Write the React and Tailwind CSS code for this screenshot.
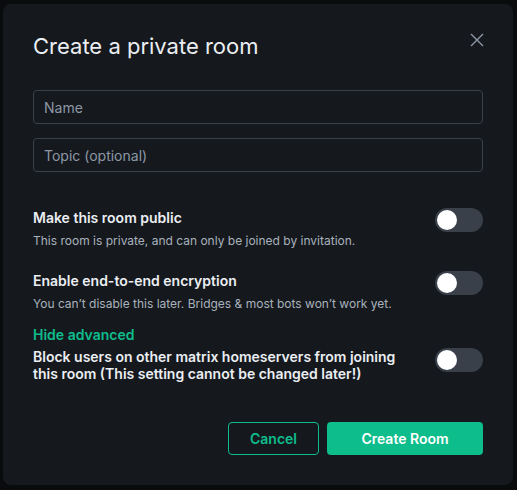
import React, { useState } from 'react';

const Toggle = ({ on, onChange }) => (
  <button
    type="button"
    onClick={() => onChange(!on)}
    className={`relative shrink-0 w-[48px] h-[24px] rounded-full transition-colors ${on ? 'bg-[#0dbd8b]' : 'bg-[#394049]'}`}
  >
    <span
      className={`absolute top-[2px] w-[20px] h-[20px] rounded-full bg-white transition-all ${on ? 'left-[26px]' : 'left-[2px]'}`}
    ></span>
  </button>
);

const ToggleRow = ({ label, description, on, onChange, className = '', labelClass = 'leading-[20px]' }) => (
  <div className={`flex items-start justify-between gap-[20px] ${className}`}>
    <div className="flex flex-col">
      <span className={`text-[14px] font-semibold text-[#ebeef2] ${labelClass}`}>{label}</span>
      {description && (
        <span className="mt-[5px] text-[12px] leading-[16px] text-[#a9b2bc]">{description}</span>
      )}
    </div>
    <Toggle on={on} onChange={onChange} />
  </div>
);

const App = () => {
  const [name, setName] = useState('');
  const [topic, setTopic] = useState('');
  const [isPublic, setIsPublic] = useState(false);
  const [encrypted, setEncrypted] = useState(false);
  const [blockFederation, setBlockFederation] = useState(false);

  return (
    <div className="min-h-screen bg-[#0a0b0d] pl-[3px] pt-[4px] font-['Inter','Noto_Sans',sans-serif]">
      <div className="w-[510px] h-[481px] rounded-[8px] bg-[#15191e] px-[30px] pt-[28px] flex flex-col">
        <div className="flex items-start justify-between">
          <h1 className="text-[22px] leading-[28px] font-normal text-[#ebeef2]">Create a private room</h1>
          <button type="button" className="mt-[1px] mr-[-1px] text-[#8d97a5]">
            <svg width="14" height="14" viewBox="0 0 14 14" fill="none" stroke="currentColor" strokeWidth="1.4">
              <path d="M1 1L13 13M13 1L1 13" />
            </svg>
          </button>
        </div>

        <input
          type="text"
          value={name}
          onChange={(e) => setName(e.target.value)}
          placeholder="Name"
          className="mt-[30px] h-[34px] w-full rounded-[4px] border border-[#394049] bg-transparent px-[10px] text-[14px] text-[#ebeef2] placeholder:text-[#8d97a5] focus:outline-none"
        />
        <input
          type="text"
          value={topic}
          onChange={(e) => setTopic(e.target.value)}
          placeholder="Topic (optional)"
          className="mt-[14px] h-[34px] w-full rounded-[4px] border border-[#394049] bg-transparent px-[10px] text-[14px] text-[#ebeef2] placeholder:text-[#8d97a5] focus:outline-none"
        />

        <ToggleRow
          className="mt-[36px]"
          label="Make this room public"
          description="This room is private, and can only be joined by invitation."
          on={isPublic}
          onChange={setIsPublic}
        />
        <ToggleRow
          className="mt-[22px]"
          label="Enable end-to-end encryption"
          description="You can’t disable this later. Bridges & most bots won’t work yet."
          on={encrypted}
          onChange={setEncrypted}
        />

        <button type="button" className="mt-[13px] self-start text-[14px] leading-[20px] font-semibold text-[#0dbd8b]">
          Hide advanced
        </button>
        <ToggleRow
          className="mt-[3px]"
          labelClass="leading-[17px]"
          label="Block users on other matrix homeservers from joining this room (This setting cannot be changed later!)"
          on={blockFederation}
          onChange={setBlockFederation}
        />

        <div className="mt-auto mb-[30px] flex justify-end gap-[8px]">
          <button
            type="button"
            className="h-[33px] w-[91px] rounded-[4px] border border-[#0dbd8b] text-[14px] font-semibold text-[#0dbd8b]"
          >
            Cancel
          </button>
          <button
            type="button"
            className="h-[33px] w-[156px] rounded-[4px] bg-[#0dbd8b] text-[14px] font-semibold text-white"
          >
            Create Room
          </button>
        </div>
      </div>
    </div>
  );
};

export default App;
